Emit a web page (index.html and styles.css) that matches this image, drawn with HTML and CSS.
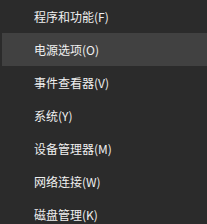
FILE: index.html
```html
<!DOCTYPE html>
<html lang="zh-CN">
<head>
<meta charset="utf-8">
<link rel="stylesheet" href="styles.css">
</head>
<body>
<ul class="menu">
  <li class="item">程序和功能(F)</li>
  <li class="item active">电源选项(O)</li>
  <li class="item">事件查看器(V)</li>
  <li class="item">系统(Y)</li>
  <li class="item">设备管理器(M)</li>
  <li class="item">网络连接(W)</li>
  <li class="item">磁盘管理(K)</li>
</ul>
</body>
</html>
```
FILE: styles.css
```css
html, body {
  margin: 0;
  padding: 0;
  background: #2b2b2b;
}
.menu {
  list-style: none;
  margin: 0;
  padding: 0;
  width: 207px;
  height: 224px;
  overflow: hidden;
  background: #2b2b2b;
  font-family: "Noto Sans CJK SC", "Noto Sans", sans-serif;
  font-size: 12px;
  color: #f0f0f0;
}
.item {
  height: 33px;
  line-height: 33px;
  padding-left: 34px;
  margin-left: 2px;
  padding-left: 32px;
  white-space: nowrap;
}
.active {
  background: #414141;
}
```
